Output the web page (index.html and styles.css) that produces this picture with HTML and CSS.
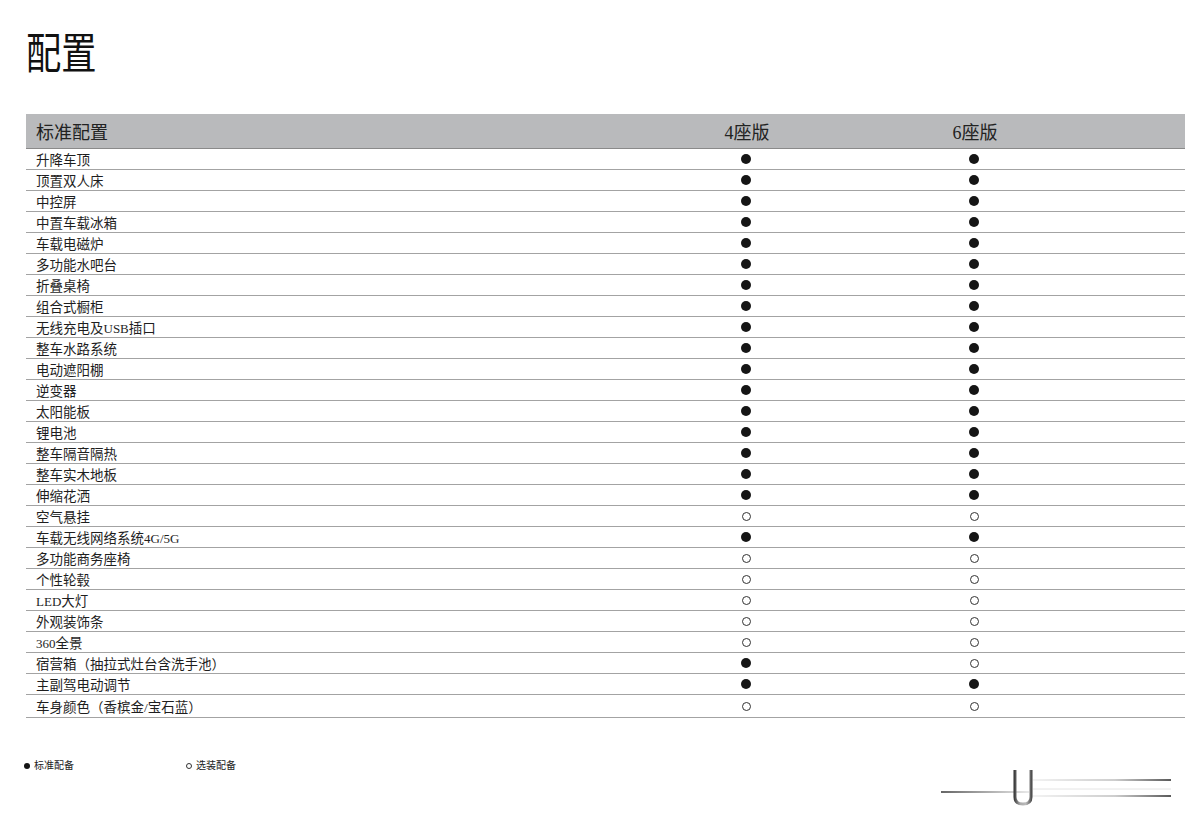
FILE: index.html
```html
<!DOCTYPE html>
<html lang="zh-CN">
<head>
<meta charset="utf-8">
<title>配置</title>
<link rel="stylesheet" href="styles.css">
</head>
<body>
<div class="page">
  <header class="title-wrap">
    <h1 class="title">配置</h1>
  </header>

  <section class="spec">
    <div class="spec-head">
      <div class="c-label">标准配置</div>
      <div class="c-val">4座版</div>
      <div class="c-val">6座版</div>
      <div></div>
    </div>

    <div class="row"><div class="c-label">升降车顶</div><div class="c-val"><span class="dot"></span></div><div class="c-val"><span class="dot"></span></div><div></div></div>
    <div class="row"><div class="c-label">顶置双人床</div><div class="c-val"><span class="dot"></span></div><div class="c-val"><span class="dot"></span></div><div></div></div>
    <div class="row"><div class="c-label">中控屏</div><div class="c-val"><span class="dot"></span></div><div class="c-val"><span class="dot"></span></div><div></div></div>
    <div class="row"><div class="c-label">中置车载冰箱</div><div class="c-val"><span class="dot"></span></div><div class="c-val"><span class="dot"></span></div><div></div></div>
    <div class="row"><div class="c-label">车载电磁炉</div><div class="c-val"><span class="dot"></span></div><div class="c-val"><span class="dot"></span></div><div></div></div>
    <div class="row"><div class="c-label">多功能水吧台</div><div class="c-val"><span class="dot"></span></div><div class="c-val"><span class="dot"></span></div><div></div></div>
    <div class="row"><div class="c-label">折叠桌椅</div><div class="c-val"><span class="dot"></span></div><div class="c-val"><span class="dot"></span></div><div></div></div>
    <div class="row"><div class="c-label">组合式橱柜</div><div class="c-val"><span class="dot"></span></div><div class="c-val"><span class="dot"></span></div><div></div></div>
    <div class="row"><div class="c-label">无线充电及<span class="lat">USB</span>插口</div><div class="c-val"><span class="dot"></span></div><div class="c-val"><span class="dot"></span></div><div></div></div>
    <div class="row"><div class="c-label">整车水路系统</div><div class="c-val"><span class="dot"></span></div><div class="c-val"><span class="dot"></span></div><div></div></div>
    <div class="row"><div class="c-label">电动遮阳棚</div><div class="c-val"><span class="dot"></span></div><div class="c-val"><span class="dot"></span></div><div></div></div>
    <div class="row"><div class="c-label">逆变器</div><div class="c-val"><span class="dot"></span></div><div class="c-val"><span class="dot"></span></div><div></div></div>
    <div class="row"><div class="c-label">太阳能板</div><div class="c-val"><span class="dot"></span></div><div class="c-val"><span class="dot"></span></div><div></div></div>
    <div class="row"><div class="c-label">锂电池</div><div class="c-val"><span class="dot"></span></div><div class="c-val"><span class="dot"></span></div><div></div></div>
    <div class="row"><div class="c-label">整车隔音隔热</div><div class="c-val"><span class="dot"></span></div><div class="c-val"><span class="dot"></span></div><div></div></div>
    <div class="row"><div class="c-label">整车实木地板</div><div class="c-val"><span class="dot"></span></div><div class="c-val"><span class="dot"></span></div><div></div></div>
    <div class="row"><div class="c-label">伸缩花洒</div><div class="c-val"><span class="dot"></span></div><div class="c-val"><span class="dot"></span></div><div></div></div>
    <div class="row"><div class="c-label">空气悬挂</div><div class="c-val"><span class="ring"></span></div><div class="c-val"><span class="ring"></span></div><div></div></div>
    <div class="row"><div class="c-label">车载无线网络系统<span class="lat">4G/5G</span></div><div class="c-val"><span class="dot"></span></div><div class="c-val"><span class="dot"></span></div><div></div></div>
    <div class="row"><div class="c-label">多功能商务座椅</div><div class="c-val"><span class="ring"></span></div><div class="c-val"><span class="ring"></span></div><div></div></div>
    <div class="row"><div class="c-label">个性轮毂</div><div class="c-val"><span class="ring"></span></div><div class="c-val"><span class="ring"></span></div><div></div></div>
    <div class="row"><div class="c-label"><span class="lat">LED</span>大灯</div><div class="c-val"><span class="ring"></span></div><div class="c-val"><span class="ring"></span></div><div></div></div>
    <div class="row"><div class="c-label">外观装饰条</div><div class="c-val"><span class="ring"></span></div><div class="c-val"><span class="ring"></span></div><div></div></div>
    <div class="row"><div class="c-label"><span class="lat">360</span>全景</div><div class="c-val"><span class="ring"></span></div><div class="c-val"><span class="ring"></span></div><div></div></div>
    <div class="row"><div class="c-label">宿营箱（抽拉式灶台含洗手池）</div><div class="c-val"><span class="dot"></span></div><div class="c-val"><span class="ring"></span></div><div></div></div>
    <div class="row"><div class="c-label">主副驾电动调节</div><div class="c-val"><span class="dot"></span></div><div class="c-val"><span class="dot"></span></div><div></div></div>
    <div class="row row-last"><div class="c-label">车身颜色（香槟金/宝石蓝）</div><div class="c-val"><span class="ring"></span></div><div class="c-val"><span class="ring"></span></div><div></div></div>
  </section>

  <footer class="legend">
    <div class="legend-item"><span class="dot dot-sm"></span>标准配备</div>
    <div class="legend-item"><span class="ring ring-sm"></span>选装配备</div>
  </footer>

  <svg class="scan-mark" width="240" height="44" viewBox="0 0 240 44" aria-hidden="true">
    <defs>
      <linearGradient id="fadeL" gradientUnits="userSpaceOnUse" x1="2" y1="0" x2="90" y2="0">
        <stop offset="0" stop-color="#333"/>
        <stop offset="1" stop-color="#e2e2e2"/>
      </linearGradient>
      <linearGradient id="fadeR" gradientUnits="userSpaceOnUse" x1="92" y1="0" x2="232" y2="0">
        <stop offset="0" stop-color="#f0f0f0"/>
        <stop offset="0.6" stop-color="#bdbdbd"/>
        <stop offset="1" stop-color="#222"/>
      </linearGradient>
      <linearGradient id="uGrad" gradientUnits="userSpaceOnUse" x1="74" y1="0" x2="94" y2="0">
        <stop offset="0" stop-color="#222"/>
        <stop offset="0.35" stop-color="#aaa"/>
        <stop offset="0.65" stop-color="#bbb"/>
        <stop offset="1" stop-color="#333"/>
      </linearGradient>
    </defs>
    <line x1="2" y1="22" x2="90" y2="22" stroke="url(#fadeL)" stroke-width="1.5"/>
    <line x1="94" y1="10" x2="232" y2="10" stroke="url(#fadeR)" stroke-width="1.5"/>
    <line x1="94" y1="19" x2="232" y2="19" stroke="#e4e4e4" stroke-width="1"/>
    <line x1="94" y1="26" x2="232" y2="26" stroke="url(#fadeR)" stroke-width="1.5"/>
    <path d="M76 0 V27 Q76 34 84 34 Q92 34 92 27 V0" fill="none" stroke="url(#uGrad)" stroke-width="3"/>
  </svg>
</div>
</body>
</html>
```

FILE: styles.css
```css
* {
  box-sizing: border-box;
}

html, body {
  margin: 0;
  padding: 0;
  background: #ffffff;
}

body {
  font-family: "Liberation Serif", "Noto Sans CJK SC", serif;
  color: #1a1a1a;
}

.page {
  position: relative;
  width: 1198px;
  height: 827px;
  overflow: hidden;
}

.title-wrap {
  height: 114px;
  padding: 22px 0 0 26px;
}

.title {
  margin: 0;
  font-family: "Noto Sans CJK SC", sans-serif;
  font-weight: 400;
  font-size: 43px;
  line-height: 56px;
  color: #111;
  transform: scaleX(0.82);
  transform-origin: left center;
  display: inline-block;
}

.spec {
  margin-left: 26px;
  width: 1159px;
}

.spec-head,
.row {
  display: grid;
  grid-template-columns: 606px 228px 228px 97px;
  align-items: center;
}

.spec-head {
  height: 35px;
  background: #b9babc;
  border-bottom: 1px solid #8a8a8a;
  font-family: "Liberation Serif", "Noto Sans CJK SC", serif;
  font-size: 18px;
  color: #222;
}

.spec-head .c-label {
  padding-left: 10px;
}

.spec-head .c-val {
  padding-left: 2px;
}

.row {
  height: 21px;
  border-bottom: 1px solid #a3a3a3;
  font-size: 13.5px;
  color: #1e1e1e;
}

.row-last {
  height: 23px;
}

.row .c-label {
  padding-left: 10px;
  padding-top: 3px;
  line-height: 16px;
  white-space: nowrap;
}

.lat {
  font-family: "Liberation Serif", serif;
  font-size: 13px;
}

.c-val {
  display: flex;
  justify-content: center;
  align-items: center;
}

.dot {
  display: inline-block;
  width: 10px;
  height: 10px;
  border-radius: 50%;
  background: #151515;
}

.ring {
  display: inline-block;
  width: 9px;
  height: 9px;
  border-radius: 50%;
  border: 1px solid #333;
  background: transparent;
}

.legend {
  display: flex;
  align-items: center;
  padding-left: 24px;
  margin-top: 41px;
  font-size: 10px;
  line-height: 14px;
  color: #222;
}

.legend-item {
  display: flex;
  align-items: center;
  gap: 4px;
}

.legend-item:first-child {
  width: 162px;
}

.dot-sm {
  width: 6px;
  height: 6px;
}

.ring-sm {
  width: 6px;
  height: 6px;
}

.scan-mark {
  position: absolute;
  left: 939px;
  top: 770px;
}
```
